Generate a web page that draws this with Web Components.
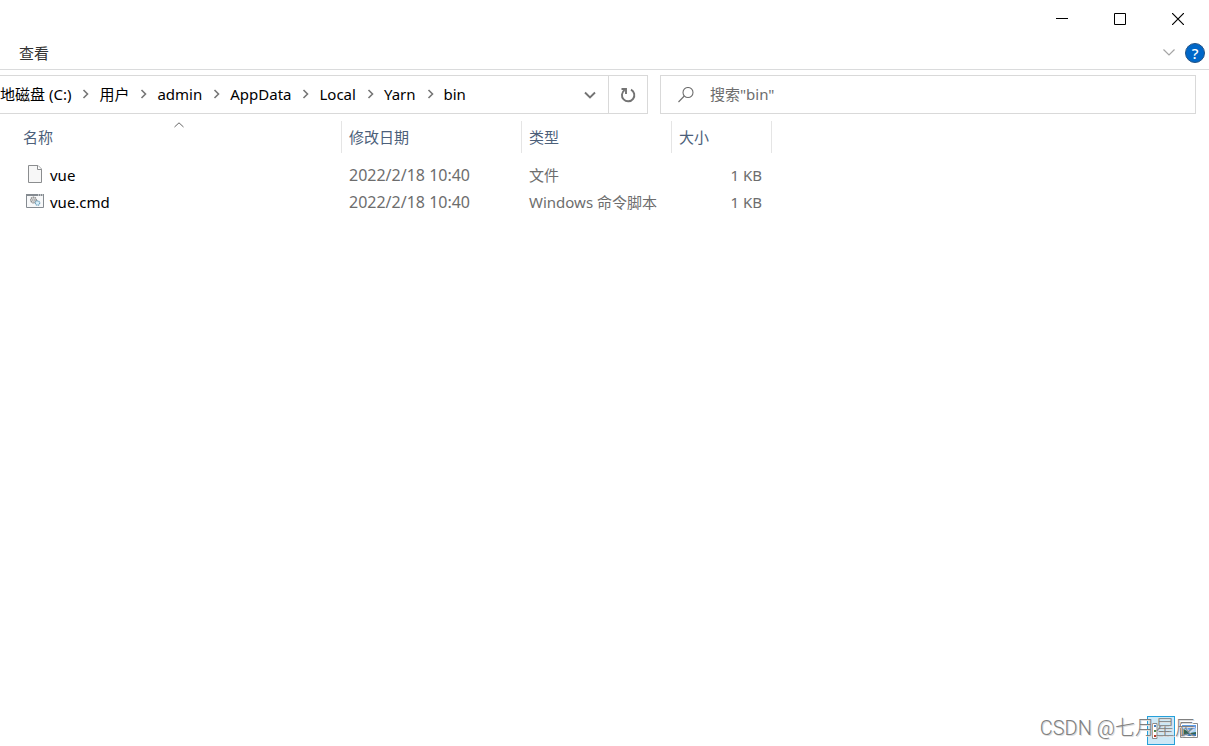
<!DOCTYPE html>
<html lang="zh-CN">
<head>
<meta charset="utf-8">
<title>bin</title>
<style>
html, body { height: 100%; margin: 0; }
body { background: #fff; color: #000; font: 15px/20px "Noto Sans", "Noto Sans CJK SC", sans-serif; overflow: hidden; }
</style>
</head>
<body>
<explorer-window>
  <window-controls slot="title"></window-controls>
  <ribbon-bar slot="ribbon">查看</ribbon-bar>
  <address-bar slot="address">
    <path-crumb>地磁盘 (C:)</path-crumb>
    <path-crumb>用户</path-crumb>
    <path-crumb>admin</path-crumb>
    <path-crumb>AppData</path-crumb>
    <path-crumb>Local</path-crumb>
    <path-crumb>Yarn</path-crumb>
    <path-crumb last>bin</path-crumb>
  </address-bar>
  <file-list></file-list>
  <view-switch slot="status"></view-switch>
</explorer-window>

<script>
const reset = `
  *, *::before, *::after { box-sizing: border-box; }
  button, input { font: inherit; color: inherit; background: none; border: 0; padding: 0; margin: 0; outline: 0; }
  button { display: flex; align-items: center; justify-content: center; }
  svg { display: block; flex: none; }
`;
function define(name, css, html) {
  const template = document.createElement('template');
  template.innerHTML = `<style>${reset}${css}</style>${html}`;
  customElements.define(name, class extends HTMLElement {
    constructor() {
      super();
      this.attachShadow({ mode: 'open' }).append(template.content.cloneNode(true));
    }
  });
}

define('explorer-window', `
  :host { display: flex; flex-direction: column; height: 100vh; background: #fff; }
  main { flex: 1; min-height: 0; overflow: hidden; }
`, `
  <slot name="title"></slot>
  <slot name="ribbon"></slot>
  <slot name="address"></slot>
  <main><slot></slot></main>
  <slot name="status"></slot>
`);

define('window-controls', `
  :host { display: flex; justify-content: flex-end; height: 38px; padding-right: 2px; }
  button { width: 58px; height: 38px; }
`, `
  <button aria-label="最小化"><svg width="12" height="12"><path d="M0 5.5H12" stroke="#000"/></svg></button>
  <button aria-label="最大化"><svg width="12" height="12"><path d="M.5.5h11v11H.5z" fill="none" stroke="#000"/></svg></button>
  <button aria-label="关闭"><svg width="12" height="12"><path d="M0 0L12 12M12 0L0 12" stroke="#000" stroke-width="1.2"/></svg></button>
`);

define('ribbon-bar', `
  :host { display: flex; align-items: center; justify-content: space-between; box-sizing: border-box; height: 32px; padding: 0 4px 2px 19px; border-bottom: 1px solid #dadbdc; color: #333; }
  div { display: flex; align-items: center; gap: 10px; }
  .help { width: 20px; height: 20px; border-radius: 50%; background: #0067c8; border: 1px solid #245384; color: #fff; font-size: 15px; line-height: 18px; font-weight: 500; }
`, `
  <button><slot></slot></button>
  <div>
    <button aria-label="展开功能区"><svg width="12" height="7"><path d="M.5.5L6 6L11.5.5" fill="none" stroke="#a5a5a5" stroke-width="1.2"/></svg></button>
    <button class="help">?</button>
  </div>
`);

define('path-crumb', `
  :host { display: flex; align-items: center; flex: none; }
  :host([last]) svg { display: none; }
  svg { margin: 0 10px 0 11px; }
  button { white-space: nowrap; }
`, `
  <button><slot></slot></button>
  <svg width="7" height="10"><path d="M1.500 1L5.500 5L1.500 9" fill="none" stroke="#767676" stroke-width="1.600"/></svg>
`);

define('address-bar', `
  :host { display: grid; grid-template-columns: minmax(0, 648fr) minmax(0, 536fr); gap: 12px; padding: 5px 13px 0 0; }
  .path, .search { display: flex; align-items: center; height: 39px; border: 1px solid #d9d9d9; }
  .path { border-left: 0; }
  nav { display: flex; flex: 1; min-width: 0; overflow: hidden; padding-bottom: 2px; }
  .drop { width: 36px; height: 37px; }
  .refresh { width: 39px; height: 37px; border-left: 1px solid #d9d9d9; }
  .search { padding-left: 17px; gap: 16px; }
  input { flex: 1; min-width: 0; padding-bottom: 2px; color: #6d6d6d; }
  input::placeholder { color: #6d6d6d; opacity: 1; }
`, `
  <div class="path">
    <nav aria-label="地址"><slot></slot></nav>
    <button class="drop" aria-label="以前的位置"><svg width="12" height="8"><path d="M1 1.500L6 6.500L11 1.500" fill="none" stroke="#737373" stroke-width="1.900"/></svg></button>
    <button class="refresh" aria-label="刷新"><svg width="16" height="16" fill="none" stroke="#737373" stroke-width="1.900"><path d="M11 2.600A6.200 6.200 0 1 1 4.600 3"/><path d="M1.500 2H6V7"/></svg></button>
  </div>
  <label class="search">
    <svg width="16" height="16" fill="none" stroke="#6d6d6d" stroke-width="1.100"><circle cx="10" cy="5.500" r="5"/><path d="M6.300 9L.5 15"/></svg>
    <input type="search" aria-label="搜索" placeholder='搜索"bin"'>
  </label>
`);

define('file-list', `
  :host { display: block; padding-top: 7px; }
  table { table-layout: fixed; border-collapse: separate; border-spacing: 0; width: 772px; }
  .name { width: 342px; } .date { width: 180px; } .type { width: 150px; } .size { width: 100px; }
  th { position: relative; height: 32px; padding: 0 0 0 7px; border-right: 1px solid #e5e5e5; color: #4c607a; font-weight: 400; text-align: left; }
  th:first-child { padding-left: 23px; }
  th svg { position: absolute; top: 1px; left: 174px; }
  td { height: 27px; padding: 0 0 0 7px; color: #6d6d6d; white-space: nowrap; }
  td:first-child { padding-left: 26px; color: #000; }
  td:nth-child(2) { font-size: 16px; }
  td:last-child { text-align: right; padding-right: 10px; }
  td div { display: flex; align-items: center; gap: 6px; }
  tbody::before { content: ""; display: table-row; height: 8px; }
`, `
  <table>
    <colgroup><col class="name"><col class="date"><col class="type"><col class="size"></colgroup>
    <thead><tr>
      <th><button>名称</button><svg width="10" height="6"><path d="M.5 5L5 .8L9.500 5" fill="none" stroke="#666"/></svg></th>
      <th><button>修改日期</button></th>
      <th><button>类型</button></th>
      <th><button>大小</button></th>
    </tr></thead>
    <tbody>
      <tr>
        <td><div><svg width="18" height="20"><path d="M2.500.5H12L15.500 4V17.500H2.500Z" fill="#f7f7f7" stroke="#8b8d8f"/><path d="M11.500.5V4.500H15.500" fill="#fff" stroke="#8b8d8f"/></svg><span>vue</span></div></td>
        <td>2022/2/18 10:40</td><td>文件</td><td>1 KB</td>
      </tr>
      <tr>
        <td><div><svg width="18" height="16"><path d="M.5.5H17.500V13.500H.5Z" fill="#f7f8f9" stroke="#858b91"/><path d="M0 1H18" stroke="#858b91" stroke-width="2"/><path d="M12 1H17" stroke="#fff" stroke-dasharray="1 1"/><circle cx="7.500" cy="6" r="2.800" fill="#ddd" stroke="#888" stroke-width="1.300" stroke-dasharray="1.400 .6"/><circle cx="7.500" cy="6" r="1" fill="#fff" stroke="#888" stroke-width=".7"/><circle cx="11.500" cy="9" r="2.200" fill="#d8effa" stroke="#6f9fba" stroke-width="1.200" stroke-dasharray="1.200 .5"/></svg><span>vue.cmd</span></div></td>
        <td>2022/2/18 10:40</td><td>Windows 命令脚本</td><td>1 KB</td>
      </tr>
    </tbody>
  </table>
`);

define('view-switch', `
  :host { position: relative; display: flex; justify-content: flex-end; box-sizing: border-box; height: 30px; padding: 0 6px 0 0; }
  button { width: 28px; height: 29px; }
  .on { background: #cce8f6; border: 1px solid #26a0da; }
  .mark { position: absolute; right: 14px; bottom: 4px; font: 300 20px/28px Roboto, "Noto Sans CJK SC", sans-serif; color: #808080; text-shadow: 1px 1px 0 #ddd; white-space: nowrap; pointer-events: none; }
`, `
  <button class="on" aria-label="详细信息"><svg width="18" height="16"><path d="M.5.5H5V15.500H.5Z" fill="#fff" stroke="#8a8a8a"/><path d="M2 3H4" stroke="#3d7cba" stroke-width="2"/><path d="M2 8H4" stroke="#4b8a4b" stroke-width="2"/><path d="M2 13H4" stroke="#b53925" stroke-width="2"/><path d="M7 3.500H11M13 3.500H17M7 8.500H11M13 8.500H17M7 13.500H11M13 13.500H17" stroke="#8a8a8a"/></svg></button>
  <button aria-label="大缩略图"><svg width="18" height="15"><path d="M.5.5H17.500V14.500H.5Z" fill="#fff" stroke="#8a8a8a"/><path d="M2 2H16V13H2Z" fill="#a9d4f5"/><path d="M2 2H16V5L10 7L2 5Z" fill="#5f9ee6"/><path d="M2 5L7 8L10 10L16 9V11H2Z" fill="#316454"/><path d="M2 11H16V13H2Z" fill="#3678b4"/></svg></button>
  <span class="mark">CSDN @七月星辰</span>
`);
</script>
</body>
</html>
